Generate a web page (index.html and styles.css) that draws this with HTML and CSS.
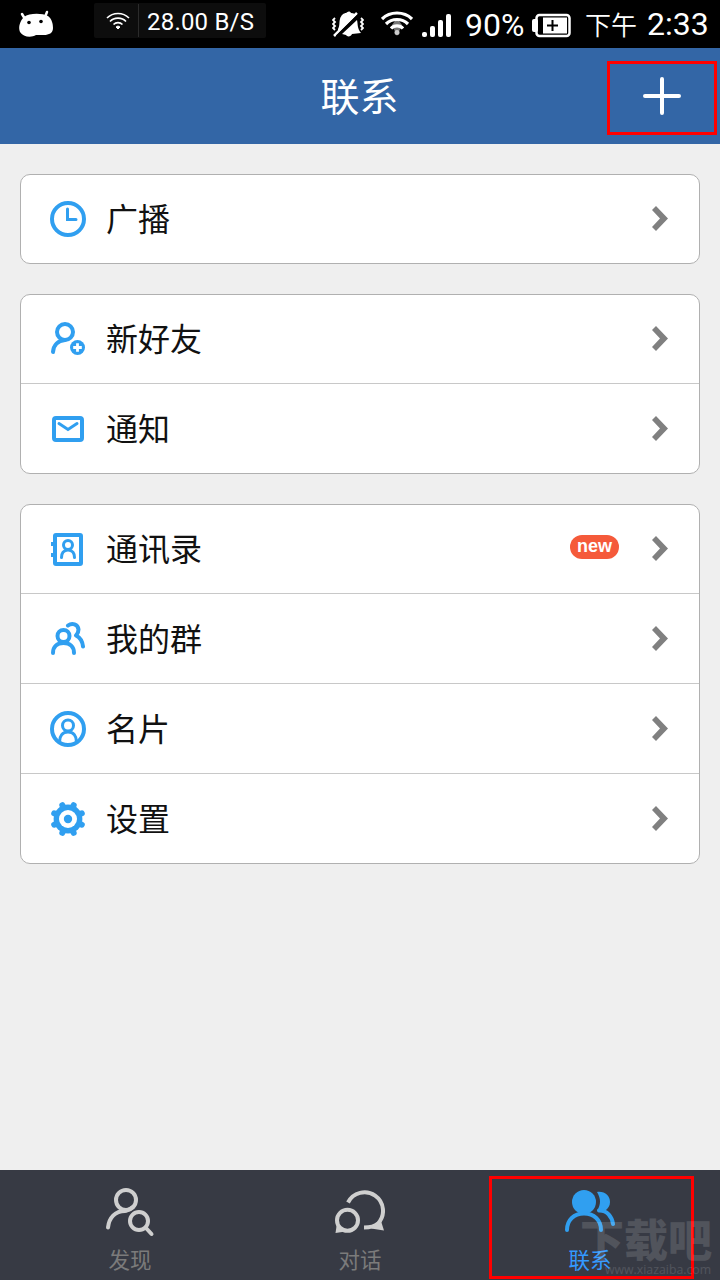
FILE: index.html
```html
<!DOCTYPE html>
<html lang="zh-CN">
<head>
    <meta charset="UTF-8">
    <meta name="viewport" content="width=device-width, initial-scale=1.0">
    <title>联系</title>
    <link rel="stylesheet" href="styles.css">
</head>
<body>
    <div class="status-bar">
        <svg class="robot" width="36" height="28" viewBox="0 0 36 28">
            <path d="M4 4l3 5M29 2l-2 5" stroke="#fff" stroke-width="2.500" stroke-linecap="round"/>
            <path d="M6 7C11 3 24 3 30 6c4 3 5 8 5 12 0 5-4 7-9 7h-8c-5 3-13 2-16-3-2-5 0-11 4-15z" fill="#fff"/>
            <circle cx="11" cy="12.500" r="1.800"/>
            <circle cx="23" cy="11.500" r="1.800"/>
        </svg>
        <div class="net-speed">
            <svg width="24" height="18" viewBox="0 0 24 18" fill="none" stroke="#fff" stroke-width="1.6">
                <path d="M1 6C7 0 17 0 23 6M4 9.500C8 5 16 5 20 9.500M7.500 12.500C10 10 14 10 16.500 12.500"/>
                <path d="M10 15l2-1 2 1-2 2z" fill="#fff" stroke-width="1"/>
            </svg>
            <span>28.00 B/S</span>
        </div>
        <div class="status-right">
            <svg class="bell" width="32" height="26" viewBox="0 0 32 26">
                <path d="M6 18c2-3 1-7 2-10 1-4 4-6 6-6 2-2 4-2 5 0 3 0 4 1 5 2L6 21zM10 23L25 9c1 4 0 8 4 13l-9 1c-1 3-5 3-6 1z" fill="#fff"/>
                <path d="M2 25L25 2" stroke="#fff" stroke-width="2.500"/>
                <path d="M4.500 25L28 2" stroke="#000" stroke-width="1.600"/>
                <path d="M3 7l-2 2 2 2-2 2 2 2-2 2 2 2M29 7l2 2-2 2 2 2-2 2 2 2-2 2" fill="none" stroke="#fff" stroke-width="1.800"/>
            </svg>
            <svg class="wifi" width="32" height="26" viewBox="0 0 32 26" fill="none" stroke="#fff" stroke-width="3.200">
                <path d="M11 14l5-7 5 7-5 11z" fill="#777" stroke="none"/>
                <path d="M1 8C9 0 23 0 31 8M5 13C11 7 21 7 27 13M10 17.500C13 14 19 14 22 17.500"/>
                <circle cx="16" cy="21.500" r="2.500" fill="#ccc" stroke="none"/>
            </svg>
            <svg class="signal" width="30" height="24" viewBox="0 0 30 24" fill="#fff">
                <rect x="0" y="18" width="5" height="5" rx="2"/>
                <rect x="8" y="12" width="5" height="11" rx="2"/>
                <rect x="16" y="6" width="5" height="17" rx="2"/>
                <rect x="24" y="0" width="5" height="23" rx="2"/>
            </svg>
            <span class="percent">90%</span>
            <svg class="battery" width="40" height="25" viewBox="0 0 40 25">
                <rect x="0" y="6" width="6" height="13" rx="2" fill="#fff"/>
                <rect x="4.500" y="2" width="33" height="21" rx="3" fill="none" stroke="#fff" stroke-width="2.500"/>
                <rect x="11" y="4.500" width="24" height="16" fill="#fff"/>
                <path d="M15 12.500h11M20.500 7v11" stroke="#000" stroke-width="2"/>
            </svg>
            <span class="half-day">下午</span>
            <span class="clock">2:33</span>
        </div>
    </div>

    <header class="header">
        <h1>联系</h1>
        <button class="add-button">
            <svg width="38" height="38" viewBox="0 0 38 38" stroke="#fff" stroke-width="4" stroke-linecap="round">
                <path d="M2 19h34M19 2v34"/>
            </svg>
        </button>
    </header>

    <main class="content">
        <div class="group">
            <div class="row">
                <svg class="icon" viewBox="0 0 36 36">
                    <circle cx="18" cy="18" r="16"/>
                    <path d="M17.500 8v10.500H26" stroke-width="3" stroke-linecap="round"/>
                </svg>
                <span class="label">广播</span>
                <svg class="arrow" viewBox="0 0 16 26"><path d="M4 0l12 12.500L4 25 0 21l8-8.500L0 4z"/></svg>
            </div>
        </div>

        <div class="group">
            <div class="row">
                <svg class="icon" viewBox="0 0 36 36" stroke-linecap="round">
                    <circle cx="15" cy="11" r="8"/>
                    <path d="M3 31C3.500 24 8 19.500 15 19"/>
                    <circle class="solid" cx="27.500" cy="26.500" r="7.500"/>
                    <path class="white" d="M23.200 26.500h8.600M27.500 22.200v8.600"/>
                </svg>
                <span class="label">新好友</span>
                <svg class="arrow" viewBox="0 0 16 26"><path d="M4 0l12 12.500L4 25 0 21l8-8.500L0 4z"/></svg>
            </div>
            <div class="row">
                <svg class="icon" viewBox="0 0 36 36">
                    <rect x="4" y="7" width="28" height="22" rx="2"/>
                    <path d="M9 12.500l9 6 9-6" stroke-width="3" stroke-linecap="round"/>
                </svg>
                <span class="label">通知</span>
                <svg class="arrow" viewBox="0 0 16 26"><path d="M4 0l12 12.500L4 25 0 21l8-8.500L0 4z"/></svg>
            </div>
        </div>

        <div class="group">
            <div class="row">
                <svg class="icon" viewBox="0 0 36 36">
                    <rect x="5" y="4" width="26" height="29" rx="1"/>
                    <path d="M1 13h3M1 24h3"/>
                    <circle cx="18" cy="14" r="4.500" stroke-width="3"/>
                    <path d="M11.500 26.500c0-4 2-7.500 6.500-7.500s6.500 3.500 6.500 7.500" stroke-width="3" stroke-linecap="round"/>
                </svg>
                <span class="label">通讯录</span>
                <span class="badge">new</span>
                <svg class="arrow" viewBox="0 0 16 26"><path d="M4 0l12 12.500L4 25 0 21l8-8.500L0 4z"/></svg>
            </div>
            <div class="row">
                <svg class="icon" viewBox="0 0 36 36" stroke-linecap="round">
                    <circle cx="13.500" cy="15" r="6"/>
                    <path d="M3 32c0-6 4-10 10.500-10S24 26 24 32"/>
                    <path d="M18 4.500C22 1.500 28 3 28.500 8.500c0 3-1 4-2.500 6 4 2 6.500 6 7 11" stroke-linejoin="round"/>
                </svg>
                <span class="label">我的群</span>
                <svg class="arrow" viewBox="0 0 16 26"><path d="M4 0l12 12.500L4 25 0 21l8-8.500L0 4z"/></svg>
            </div>
            <div class="row">
                <svg class="icon" viewBox="0 0 36 36">
                    <circle cx="18" cy="18" r="16"/>
                    <circle cx="18" cy="14.500" r="5.500" stroke-width="3"/>
                    <path d="M9.500 31c0-6 3-10 8.500-10s8.500 4 8.500 10" stroke-width="3"/>
                </svg>
                <span class="label">名片</span>
                <svg class="arrow" viewBox="0 0 16 26"><path d="M4 0l12 12.500L4 25 0 21l8-8.500L0 4z"/></svg>
            </div>
            <div class="row">
                <svg class="icon" viewBox="0 0 36 36">
                    <circle class="solid" cx="18" cy="18" r="14.400"/>
                    <path d="M12.300 4.200l11.400 27.600M23.700 4.200L12.300 31.800M4.200 12.300l27.600 11.400M31.800 12.300L4.200 23.700" stroke-width="6" stroke-linecap="round"/>
                    <circle cx="18" cy="18" r="9" fill="#fff" stroke="none"/>
                    <circle class="solid" cx="18" cy="18" r="4.200"/>
                </svg>
                <span class="label">设置</span>
                <svg class="arrow" viewBox="0 0 16 26"><path d="M4 0l12 12.500L4 25 0 21l8-8.500L0 4z"/></svg>
            </div>
        </div>
    </main>

    <nav class="tab-bar">
        <div class="tab">
            <svg viewBox="0 0 50 50" stroke-linecap="round">
                <circle cx="21" cy="13" r="10"/>
                <path d="M3 40.500C4 31 10 24 20 24c3 0 5-2 8-4"/>
                <circle cx="34" cy="34" r="9"/>
                <path d="M41 41l5.500 6"/>
            </svg>
            <span>发现</span>
        </div>
        <div class="tab">
            <svg viewBox="0 0 50 50">
                <circle cx="12.500" cy="33.300" r="10.500"/>
                <path class="fill" d="M2 36l-1.500 10 10-1.500z"/>
                <path d="M13 15.500A18.500 18.500 0 1 1 43 36.500C39 40 34 40.500 29 40.500"/>
                <path class="fill" d="M46 34l3 9.500-13-2z"/>
            </svg>
            <span>对话</span>
        </div>
        <div class="tab active">
            <svg viewBox="0 0 50 50" stroke-linecap="round">
                <circle class="fill" cx="19" cy="15" r="12"/>
                <path d="M2 43C2 33 9 26.500 19 26.500S36 33 36 43"/>
                <path class="fill" d="M32 5c8-1 13 4 13 10 0 4-2 6-4 8l-9 1c4-7 4-12 0-19z"/>
                <path d="M34 23.500C42 23 47 30 48 37"/>
            </svg>
            <span>联系</span>
        </div>
        <div class="highlight"></div>
        <div class="watermark">
            <b>下载吧</b>
            <small>www.xiazaiba.com</small>
        </div>
    </nav>
</body>
</html>
```
FILE: styles.css
```css
* {
    box-sizing: border-box;
    margin: 0;
    padding: 0;
}

body {
    display: flex;
    flex-direction: column;
    height: 1280px;
    width: 720px;
    overflow: hidden;
    background-color: #efefef;
    font-family: Roboto, "Noto Sans CJK SC", sans-serif;
    color: #111;
}

svg {
    display: block;
    flex-shrink: 0;
}

/* Status bar */
.status-bar {
    display: flex;
    align-items: center;
    height: 48px;
    background-color: #000;
    color: #fff;
    white-space: nowrap;
}

.robot {
    margin-left: 18px;
}

.net-speed {
    display: flex;
    align-items: center;
    width: 172px;
    height: 35px;
    margin: -7px 0 0 40px;
    padding-left: 12px;
    background-color: #0d0d0d;
    border-radius: 2px;
    font-size: 24px;
    letter-spacing: 0.2px;
}

.net-speed span {
    height: 33px;
    margin-left: 8px;
    padding-left: 8px;
    border-left: 1px solid #2b2b2b;
    line-height: 36px;
}

.status-right {
    display: flex;
    align-items: center;
    margin-left: auto;
    padding-right: 12px;
    font-size: 32px;
    line-height: 48px;
}

.wifi {
    margin-left: 17px;
}

.signal {
    margin: 3px 0 0 9px;
}

.percent {
    width: 59px;
    margin: 1px 0 0 13px;
}

.battery {
    margin: 2px 0 0 8px;
}

.half-day {
    width: 52px;
    margin: 0 0 0 13px;
    font-family: "Noto Sans CJK SC", sans-serif;
    font-size: 26px;
    font-weight: 350;
}

.clock {
    width: 61px;
    margin-left: 10px;
}

/* Header */
.header {
    display: flex;
    align-items: center;
    justify-content: center;
    position: relative;
    height: 96px;
    background-color: #3366a6;
    color: #fff;
}

.header h1 {
    padding: 5px 1px 0 0;
    font-size: 39px;
    font-weight: 400;
    line-height: 91px;
}

.add-button {
    display: flex;
    align-items: center;
    justify-content: center;
    position: absolute;
    top: 13px;
    right: 3px;
    width: 110px;
    height: 74px;
    padding-bottom: 4px;
    background: none;
    border: 3px solid #f00;
}

/* Lists */
.content {
    display: flex;
    flex-direction: column;
    flex: 1;
    gap: 30px;
    padding: 30px 20px;
}

.group {
    background-color: #fff;
    border: 1px solid #b0b0b0;
    border-radius: 10px;
}

.row {
    display: flex;
    align-items: center;
    height: 90px;
    padding: 0 31px 0 29px;
    border-bottom: 1px solid #c8c8c8;
}

.row:first-child,
.row:last-child {
    height: 89px;
}

.row:last-child {
    border-bottom: none;
}

.row:only-child {
    height: 88px;
}

.row + .row {
    padding-top: 1px;
}

.icon {
    width: 36px;
    height: 36px;
    fill: none;
    stroke: #309ff0;
    stroke-width: 4;
}

.icon .solid {
    fill: #309ff0;
    stroke: none;
}

.icon .white {
    stroke: #fff;
    stroke-width: 2.8;
    stroke-linecap: butt;
}

.label {
    flex: 1;
    margin-left: 20px;
    padding-top: 2px;
    font-size: 32px;
    line-height: 48px;
}

.badge {
    width: 49px;
    height: 24px;
    margin: -4px 33px 0 0;
    background-color: #f55a3a;
    border-radius: 12px;
    color: #fff;
    font: bold 18px/22px "Liberation Sans", sans-serif;
    text-align: center;
}

.arrow {
    width: 16px;
    height: 26px;
    fill: #808080;
}

/* Bottom tabs */
.tab-bar {
    display: flex;
    position: relative;
    height: 110px;
    padding: 17px 15px 0;
    background-color: #373a44;
}

.tab {
    display: flex;
    flex: 1;
    flex-direction: column;
    align-items: center;
    color: #7b7b7b;
    font-size: 21.5px;
    line-height: 48px;
}

.tab svg {
    width: 50px;
    height: 50px;
    fill: none;
    stroke: #cfcfcf;
    stroke-width: 4;
}

.tab .fill {
    fill: #cfcfcf;
    stroke: none;
}

.tab.active {
    color: #3399ff;
}

.tab.active svg {
    stroke: #309ff0;
}

.tab.active .fill {
    fill: #309ff0;
}

.highlight {
    position: absolute;
    top: 6px;
    left: 489px;
    width: 205px;
    height: 103px;
    border: 3px solid #f00;
}

.watermark {
    position: absolute;
    top: 46px;
    left: 580px;
    width: 140px;
    color: #fff;
    opacity: 0.13;
    white-space: nowrap;
}

.watermark b {
    display: block;
    font-size: 44px;
    font-weight: 900;
    line-height: 52px;
}

.watermark small {
    display: block;
    margin: -5px 0 0 25px;
    font: 12.3px/14px "Open Sans", sans-serif;
}
```
